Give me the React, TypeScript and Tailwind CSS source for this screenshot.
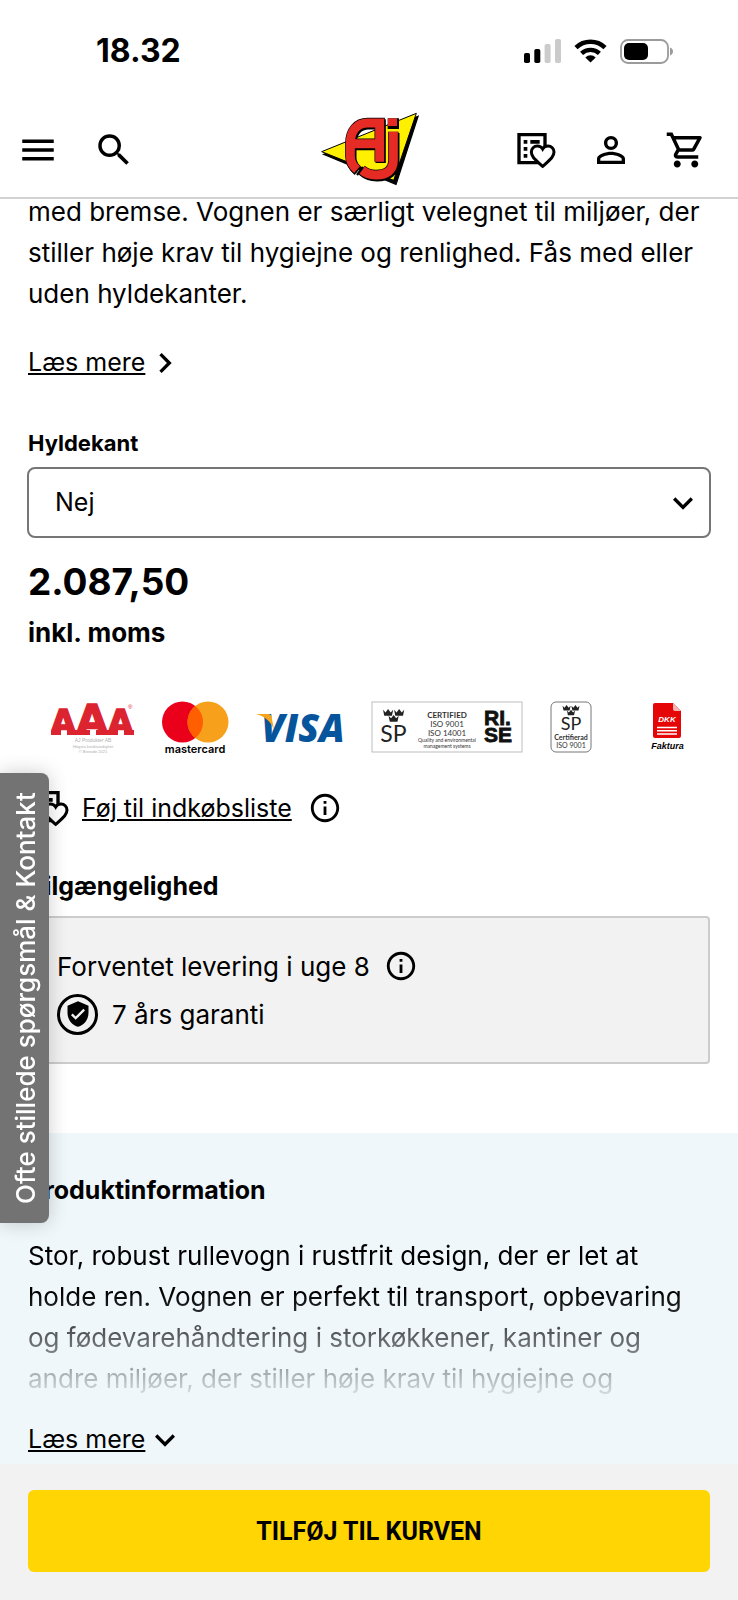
import React from "react";
import {
  MdChevronRight,
  MdExpandMore,
  MdInfoOutline,
  MdMenu,
  MdOutlineShoppingCart,
  MdPersonOutline,
  MdSearch,
  MdVerifiedUser,
} from "react-icons/md";

function StatusBar() {
  return (
    <div className="flex h-[102px] items-center justify-between pr-[64px] pl-[96px]">
      <span className="text-[32px] leading-none font-bold">18.32</span>
      <div className="flex items-center gap-[13px]">
        <svg width="37" height="24" viewBox="0 0 37 24" aria-hidden="true">
          <rect x="0" y="14" width="6" height="10" rx="1.8" />
          <rect x="10.3" y="10" width="6" height="14" rx="1.8" />
          <rect x="20.6" y="5" width="6" height="19" rx="1.8" fill="#cbcbcb" />
          <rect x="31" y="0" width="6" height="24" rx="1.8" fill="#cbcbcb" />
        </svg>
        <svg width="33" height="24" viewBox="0 0 33 24" fill="none" stroke="#000" aria-hidden="true">
          <path d="M2 8.6a21 21 0 0 1 29 0" strokeWidth="4.6" />
          <path d="M7.6 14.4a13 13 0 0 1 17.8 0" strokeWidth="4.4" />
          <path d="M11.3 18.4a7.6 7.6 0 0 1 10.4 0L16.5 23.6z" fill="#000" stroke="none" />
        </svg>
        <svg width="54" height="25" viewBox="0 0 54 25" aria-hidden="true">
          <rect x="1" y="1" width="47" height="23" rx="7" fill="none" stroke="#9b9b9b" strokeWidth="1.8" />
          <rect x="4" y="4" width="24" height="17" rx="5" />
          <path d="M50 8.5c2 .8 3 2.200 3 4s-1 3.200-3 4z" fill="#9b9b9b" />
        </svg>
      </div>
    </div>
  );
}

function WishlistIcon() {
  return (
    <svg width="42" height="42" viewBox="0 0 126 126" aria-hidden="true">
      <path d="M12 17h78v84H12z" fill="none" stroke="#000" strokeWidth="10" />
      <path d="M26 33h11v11H26zM46 33h28v11H46zM26 54h11v11H26zM26 75h11v11H26z" />
      <path
        d="M83 112C62 93 49 84 49 69c0-10 8-18 18-18 7 0 13 4 16 9 3-5 9-9 16-9 10 0 18 8 18 18 0 15-13 24-34 43z"
        fill="#fff"
        stroke="#000"
        strokeWidth="9"
      />
    </svg>
  );
}

function Logo() {
  const a = "M242 186V70h-36c-32 0-52 24-52 60v40c0 16 7 29 20 40M154 132h88";
  const j = "M283 96v86c0 30-20 44-52 44-18 0-32-5-44-16";
  return (
    <svg width="100" height="76" viewBox="60 37 300 228" aria-hidden="true">
      <path d="M74 164 357 50 291 254z" stroke="#000" strokeWidth="4" />
      <path d="M68 156 352 41 284 242z" fill="#fff000" stroke="#000" strokeWidth="3" />
      <g fill="none" stroke="#000">
        <path d={j} strokeWidth="31" transform="translate(3 4)" />
        <path d={a} strokeWidth="31" transform="translate(3 4)" />
        <path d="M266 55h30v28h-30z" fill="#000" strokeWidth="4" transform="translate(2 3)" />
      </g>
      <g fill="none" stroke="#e62b25">
        <path d={j} stroke="#000" strokeWidth="31" />
        <path d={a} stroke="#000" strokeWidth="31" />
        <path d={j} strokeWidth="27" />
        <path d={a} strokeWidth="27" />
      </g>
      <path d="M267 56h27v23h-27z" fill="#e62b25" />
      <path d="m174 226 18-24" stroke="#000" strokeWidth="7" />
    </svg>
  );
}

function Header() {
  return (
    <header className="relative z-10 border-b-2 border-[#d2d2d2] bg-white">
      <StatusBar />
      <div className="grid h-[95px] grid-cols-[1fr_auto_1fr] items-center">
        <nav className="flex gap-[34px] pl-[17px]">
          <button type="button" aria-label="Menu">
            <MdMenu size={42} />
          </button>
          <button type="button" aria-label="Søg">
            <MdSearch size={42} />
          </button>
        </nav>
        <a href="#forside" aria-label="AJ">
          <Logo />
        </a>
        <nav className="flex justify-end gap-[33px] pr-[31px]">
          <button type="button" aria-label="Indkøbsliste">
            <WishlistIcon />
          </button>
          <button type="button" aria-label="Min konto">
            <MdPersonOutline size={42} />
          </button>
          <button type="button" aria-label="Kurv">
            <MdOutlineShoppingCart size={42} />
          </button>
        </nav>
      </div>
    </header>
  );
}

const crown = "M0 1 3 4 6 0 9 4 12 1 10.500 8h-9z";

function Crowns() {
  return (
    <g fill="#222">
      <path d={crown} />
      <path d={crown} transform="translate(13 0)" />
      <path d={crown} transform="translate(6.500 7)" />
    </g>
  );
}

function PaymentLogos() {
  return (
    <div className="mt-12 flex gap-[27px] pl-[23px]">
      <svg width="83" height="54" viewBox="0 0 83 54" aria-hidden="true">
        <text
          x="41"
          y="33"
          fill="#dc2430"
          stroke="#dc2430"
          strokeWidth="1.500"
          fontFamily="DejaVu Sans"
          fontWeight="700"
          textAnchor="middle"
        >
          <tspan fontSize="33">A</tspan>
          <tspan fontSize="41">A</tspan>
          <tspan fontSize="33">A</tspan>
        </text>
        <path d="M0 29h10v5H0zM16 29h23v5H16zM45 29h22v5H45zM73 29h10v5H73z" fill="#dc2430" />
        <text x="77" y="8" fontSize="6" fill="#dc2430" fontFamily="Liberation Sans">®</text>
        <g fill="#b0b0b0" fontFamily="Liberation Sans" textAnchor="middle">
          <text x="42" y="41" fontSize="5">AJ Produkter AB</text>
          <text x="42" y="47" fontSize="4">Högsta kreditvärdighet</text>
          <text x="42" y="52" fontSize="4">© Bisnode 2021</text>
        </g>
      </svg>
      <svg width="68" height="54" viewBox="0 0 68 54" aria-hidden="true">
        <circle cx="21.500" cy="21" r="20.500" fill="#eb001b" />
        <circle cx="47" cy="21" r="20.500" fill="#f6a01b" />
        <path d="M34.250 4.900a20.500 20.500 0 0 1 0 32.200a20.500 20.500 0 0 1 0-32.200z" fill="#ff5f00" />
        <text x="34" y="52" fontSize="11" fontWeight="600" fontFamily="Inter" textAnchor="middle">mastercard</text>
      </svg>
      <svg width="88" height="54" viewBox="0 0 88 54" aria-hidden="true">
        <text x="47" y="41" fontSize="38" fontWeight="800" fontStyle="italic" fontFamily="Open Sans" fill="#06549c" textAnchor="middle">VISA</text>
        <path d="M0 13h11c4 0 5 2 5 5l2 11C15 20 8 15 0 13z" fill="#f7a41d" />
      </svg>
      <svg width="152" height="54" viewBox="0 0 152 54" aria-hidden="true">
        <rect x="1" y="1" width="150" height="50" fill="#fff" stroke="#bdbdbd" strokeWidth="1" />
        <g transform="translate(12 8) scale(.85)"><Crowns /></g>
        <text x="22.500" y="41" fontSize="23" fontFamily="Lato" textAnchor="middle" fill="#222">SP</text>
        <g fontFamily="Lato" fill="#333" textAnchor="middle">
          <text x="76" y="17" fontSize="8" fontWeight="700">CERTIFIED</text>
          <text x="76" y="26" fontSize="8">ISO 9001</text>
          <text x="76" y="35" fontSize="8">ISO 14001</text>
          <text x="76" y="41" fontSize="5">Quality and environmental</text>
          <text x="76" y="47" fontSize="5">management systems</text>
        </g>
        <g fontFamily="Liberation Sans" fontWeight="700" fontSize="21" fill="#111" stroke="#111" strokeWidth=".8">
          <text x="113" y="24">RI.</text>
          <text x="113" y="41">SE</text>
        </g>
      </svg>
      <svg width="42" height="54" viewBox="0 0 42 54" aria-hidden="true">
        <rect x="1" y="1" width="40" height="50" rx="5" fill="#fff" stroke="#777" strokeWidth="1" />
        <g transform="translate(12.500 4) scale(.68)"><Crowns /></g>
        <text x="21" y="29" fontSize="18" fontFamily="Lato" textAnchor="middle" fill="#222">SP</text>
        <text x="21" y="39" fontSize="7" fontWeight="700" fontFamily="Lato" textAnchor="middle" fill="#333">Certifierad</text>
        <text x="21" y="47" fontSize="7" fontFamily="Lato" textAnchor="middle" fill="#333">ISO 9001</text>
      </svg>
      <svg className="ml-8" width="34" height="54" viewBox="0 0 34 54" aria-hidden="true">
        <path d="M4 2h18l8 8v25a2 2 0 0 1-2 2H4a2 2 0 0 1-2-2V4a2 2 0 0 1 2-2z" fill="#e50708" />
        <path d="M22 2l8 8h-6a2 2 0 0 1-2-2z" fill="#f5b5b5" />
        <text x="16" y="21" fontSize="8" fontWeight="700" fontStyle="italic" fontFamily="Liberation Sans" fill="#fff" textAnchor="middle">DKK</text>
        <path d="M6 26.500h20M6 29.800h20M6 33h20" stroke="#fff" strokeWidth="1.600" />
        <text x="16.500" y="48" fontSize="9" fontWeight="700" fontStyle="italic" fontFamily="Liberation Sans" textAnchor="middle">Faktura</text>
      </svg>
    </div>
  );
}

export default function App() {
  return (
    <div className="relative flex min-h-screen flex-col bg-white font-['Inter',sans-serif] text-[25px] leading-[41px] text-black">
      <Header />
      <main className="flex flex-1 flex-col">
        <section className="px-7">
          <p className="-mt-2 text-[26px]">
            med bremse. Vognen er særligt velegnet til miljøer, der stiller høje krav til hygiejne og renlighed. Fås med
            eller uden hyldekanter.
          </p>
          <a href="#beskrivelse" className="mt-7 flex items-center">
            <span className="underline decoration-2 underline-offset-2">Læs mere</span>
            <MdChevronRight size={40} />
          </a>
          <label htmlFor="hyldekant" className="mt-10 block text-[22px] font-bold">
            Hyldekant
          </label>
          <div className="relative -mx-px mt-[3px]">
            <select
              id="hyldekant"
              className="h-[71px] w-full appearance-none rounded-lg border-2 border-[#767676] bg-white px-[26px]"
            >
              <option>Nej</option>
            </select>
            <MdExpandMore size={40} className="pointer-events-none absolute top-4 right-2" />
          </div>
          <p className="mt-[23px] text-[37px] font-bold">2.087,50</p>
          <p className="mt-2.5 text-[26px] font-bold">inkl. moms</p>
          <PaymentLogos />
          <div className="mt-8 flex items-center">
            <WishlistIcon />
            <a href="#indkobsliste" className="ml-3 underline decoration-2 underline-offset-2">
              Føj til indkøbsliste
            </a>
            <button type="button" aria-label="Om indkøbslister" className="ml-4">
              <MdInfoOutline size={34} />
            </button>
          </div>
          <h2 className="mt-[37px] font-bold">Tilgængelighed</h2>
          <div className="mt-[9px] flex h-[148px] flex-col justify-center gap-[7px] rounded border-2 border-[#cccccc] bg-[#f2f2f2] px-[27px] text-[26px]">
            <div className="flex items-center gap-[14px]">
              <span>Forventet levering i uge 8</span>
              <button type="button" aria-label="Om levering">
                <MdInfoOutline size={34} />
              </button>
            </div>
            <div className="flex items-center gap-[14px]">
              <span className="flex size-[41px] items-center justify-center rounded-full border-[3px] border-black">
                <MdVerifiedUser size={28} />
              </span>
              <span>7 års garanti</span>
            </div>
          </div>
        </section>
        <section className="mt-[69px] flex-1 bg-[#eff7fb] px-7 pt-[37px] pb-[2px]">
          <h2 className="font-bold">Produktinformation</h2>
          <p className="mt-6 h-[164px] overflow-hidden text-[26px] [mask-image:linear-gradient(to_bottom,black_35%,transparent_105%)]">
            Stor, robust rullevogn i rustfrit design, der er let at holde ren. Vognen er perfekt til transport,
            opbevaring og fødevarehåndtering i storkøkkener, kantiner og andre miljøer, der stiller høje krav til
            hygiejne og
          </p>
          <button type="button" className="mt-5 flex items-center">
            <span className="underline decoration-2 underline-offset-2">Læs mere</span>
            <MdExpandMore size={40} />
          </button>
        </section>
      </main>
      <footer className="sticky bottom-0 bg-[#f2f2f2] px-7 pt-[26px] pb-[28px]">
        <button type="button" className="h-[82px] w-full rounded-md bg-[#ffd504] font-['Roboto',sans-serif] font-bold">
          TILFØJ TIL KURVEN
        </button>
      </footer>
      <button
        type="button"
        className="absolute top-[773px] left-0 z-20 flex h-[450px] w-[49px] rotate-180 items-center justify-center rounded-l-lg bg-[#737373] pr-0.5 text-[26px] font-medium text-white shadow-[0_0_20px_rgba(0,0,0,0.2)] [writing-mode:vertical-rl]"
      >
        Ofte stillede spørgsmål &amp; Kontakt
      </button>
    </div>
  );
}
